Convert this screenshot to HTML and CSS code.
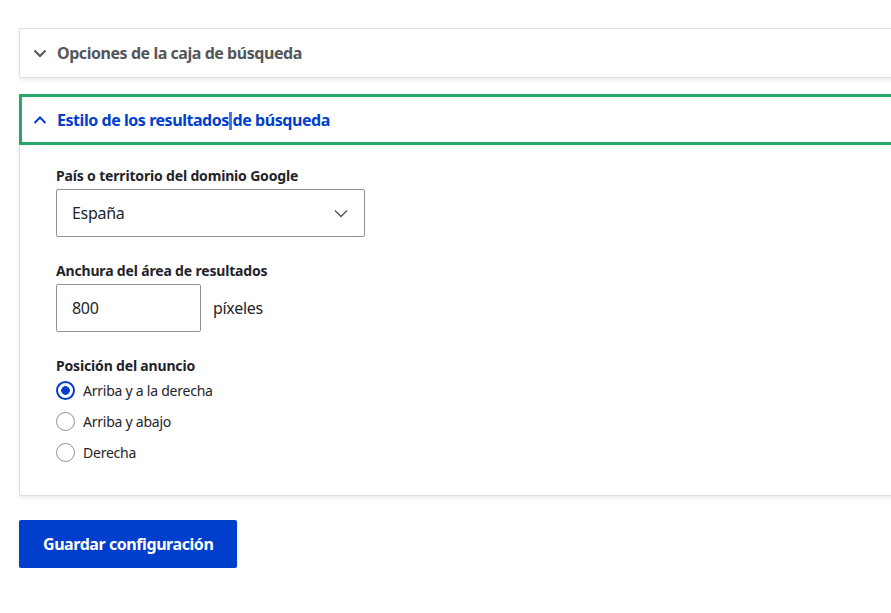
FILE: index.html
```html
<!DOCTYPE html>
<html lang="es">
<head>
<meta charset="utf-8">
<title>Configuración</title>
<link rel="stylesheet" href="styles.css">
</head>
<body>
<div class="page">
  <details class="panel">
    <summary class="summary">
      <svg class="chev" width="14" height="14" viewBox="0 0 14 14"><path d="M1.5 4.5 L7 10 L12.5 4.5" fill="none" stroke="#55565b" stroke-width="2"/></svg>
      <span>Opciones de la caja de búsqueda</span>
    </summary>
  </details>

  <details class="panel open" open>
    <summary class="summary active">
      <svg class="chev" width="14" height="14" viewBox="0 0 14 14"><path d="M1.5 10 L7 4.5 L12.5 10" fill="none" stroke="#003ecc" stroke-width="2"/></svg>
      <span>Estilo de los resultados<span class="caret"></span> de búsqueda</span>
    </summary>
    <div class="body">
      <div class="field">
        <label class="label" for="pais">País o territorio del dominio Google</label>
        <div class="select">
          <span>España</span>
          <svg width="14" height="9" viewBox="0 0 14 9"><path d="M1 1.5 L7 7.5 L13 1.5" fill="none" stroke="#55565b" stroke-width="1.5"/></svg>
        </div>
      </div>
      <div class="field">
        <label class="label" for="ancho">Anchura del área de resultados</label>
        <div class="row">
          <div class="input">800</div>
          <span class="suffix">píxeles</span>
        </div>
      </div>
      <div class="field">
        <div class="label">Posición del anuncio</div>
        <div class="radios">
          <div class="radio"><span class="dot checked"></span><span>Arriba y a la derecha</span></div>
          <div class="radio"><span class="dot"></span><span>Arriba y abajo</span></div>
          <div class="radio"><span class="dot"></span><span>Derecha</span></div>
        </div>
      </div>
    </div>
  </details>

  <div class="actions">
    <button class="btn">Guardar configuración</button>
  </div>
</div>
</body>
</html>
```
FILE: styles.css
```css
html, body {
  margin: 0;
  padding: 0;
  background: #fff;
  overflow: hidden;
}
body {
  font-family: "Noto Sans", "Open Sans", sans-serif;
  color: #232429;
}
.page {
  padding: 28px 0 0 19px;
}
.panel {
  display: block;
  margin-right: -30px;
  border: 1px solid #dedfe4;
  border-radius: 2px;
  box-shadow: 0 2px 4px rgba(0,0,0,0.08);
  background: #fff;
  margin-bottom: 16px;
}
.summary {
  list-style: none;
  display: flex;
  align-items: center;
  gap: 10px;
  height: 48px;
  padding: 0 0 0 13px;
  font-size: 16px;
  font-weight: 700;
  letter-spacing: -0.45px;
  color: #55565b;
  cursor: pointer;
  box-sizing: border-box;
}
.summary::-webkit-details-marker { display: none; }
.summary.active {
  color: #003ecc;
  outline: 3px solid #26a769;
  outline-offset: -2px;
  height: 49px;
}
.chev { flex: none; }
.caret {
  display: inline-block;
  width: 3px;
  height: 18px;
  background: #4a78e0;
  vertical-align: -4px;
  margin-right: -3px;
}
.body {
  padding: 23px 0 32px 36px;
}
.field {
  margin-bottom: 25px;
}
.field:last-child {
  margin-bottom: 0;
}
.label {
  display: block;
  font-size: 14px;
  font-weight: 700;
  letter-spacing: -0.17px;
  line-height: 18px;
  margin-bottom: 4px;
  color: #232429;
}
.select {
  width: 309px;
  height: 48px;
  box-sizing: border-box;
  border: 1px solid #8e929c;
  border-radius: 2px;
  display: flex;
  align-items: center;
  justify-content: space-between;
  padding: 0 16px 0 15px;
  font-size: 16px;
  letter-spacing: -0.3px;
}
.row {
  display: flex;
  align-items: center;
  gap: 12px;
}
.input {
  width: 145px;
  height: 48px;
  box-sizing: border-box;
  border: 1px solid #8e929c;
  border-radius: 2px;
  display: flex;
  align-items: center;
  padding-left: 15px;
  font-size: 16px;
  letter-spacing: -0.3px;
}
.suffix { font-size: 16px; letter-spacing: -0.3px; }
.radios {
  display: flex;
  flex-direction: column;
  gap: 10px;
  margin-top: 5px;
}
.radio {
  display: flex;
  align-items: center;
  gap: 8px;
  font-size: 14px;
  letter-spacing: -0.24px;
  height: 21px;
}
.dot {
  width: 19px;
  height: 19px;
  box-sizing: border-box;
  border: 1px solid #8e929c;
  border-radius: 50%;
  background: #fff;
}
.dot.checked {
  border: 2px solid #003ecc;
  background: radial-gradient(circle, #003ecc 0 4px, #fff 4.6px);
}
.actions {
  padding-top: 8px;
}
.btn {
  background: #003ecc;
  color: #fff;
  border: 0;
  border-radius: 2px;
  height: 48px;
  padding: 0 24px;
  font-family: inherit;
  font-size: 16px;
  font-weight: 700;
  letter-spacing: -0.43px;
  box-shadow: 0 1px 2px rgba(0,0,0,0.15);
}
```
